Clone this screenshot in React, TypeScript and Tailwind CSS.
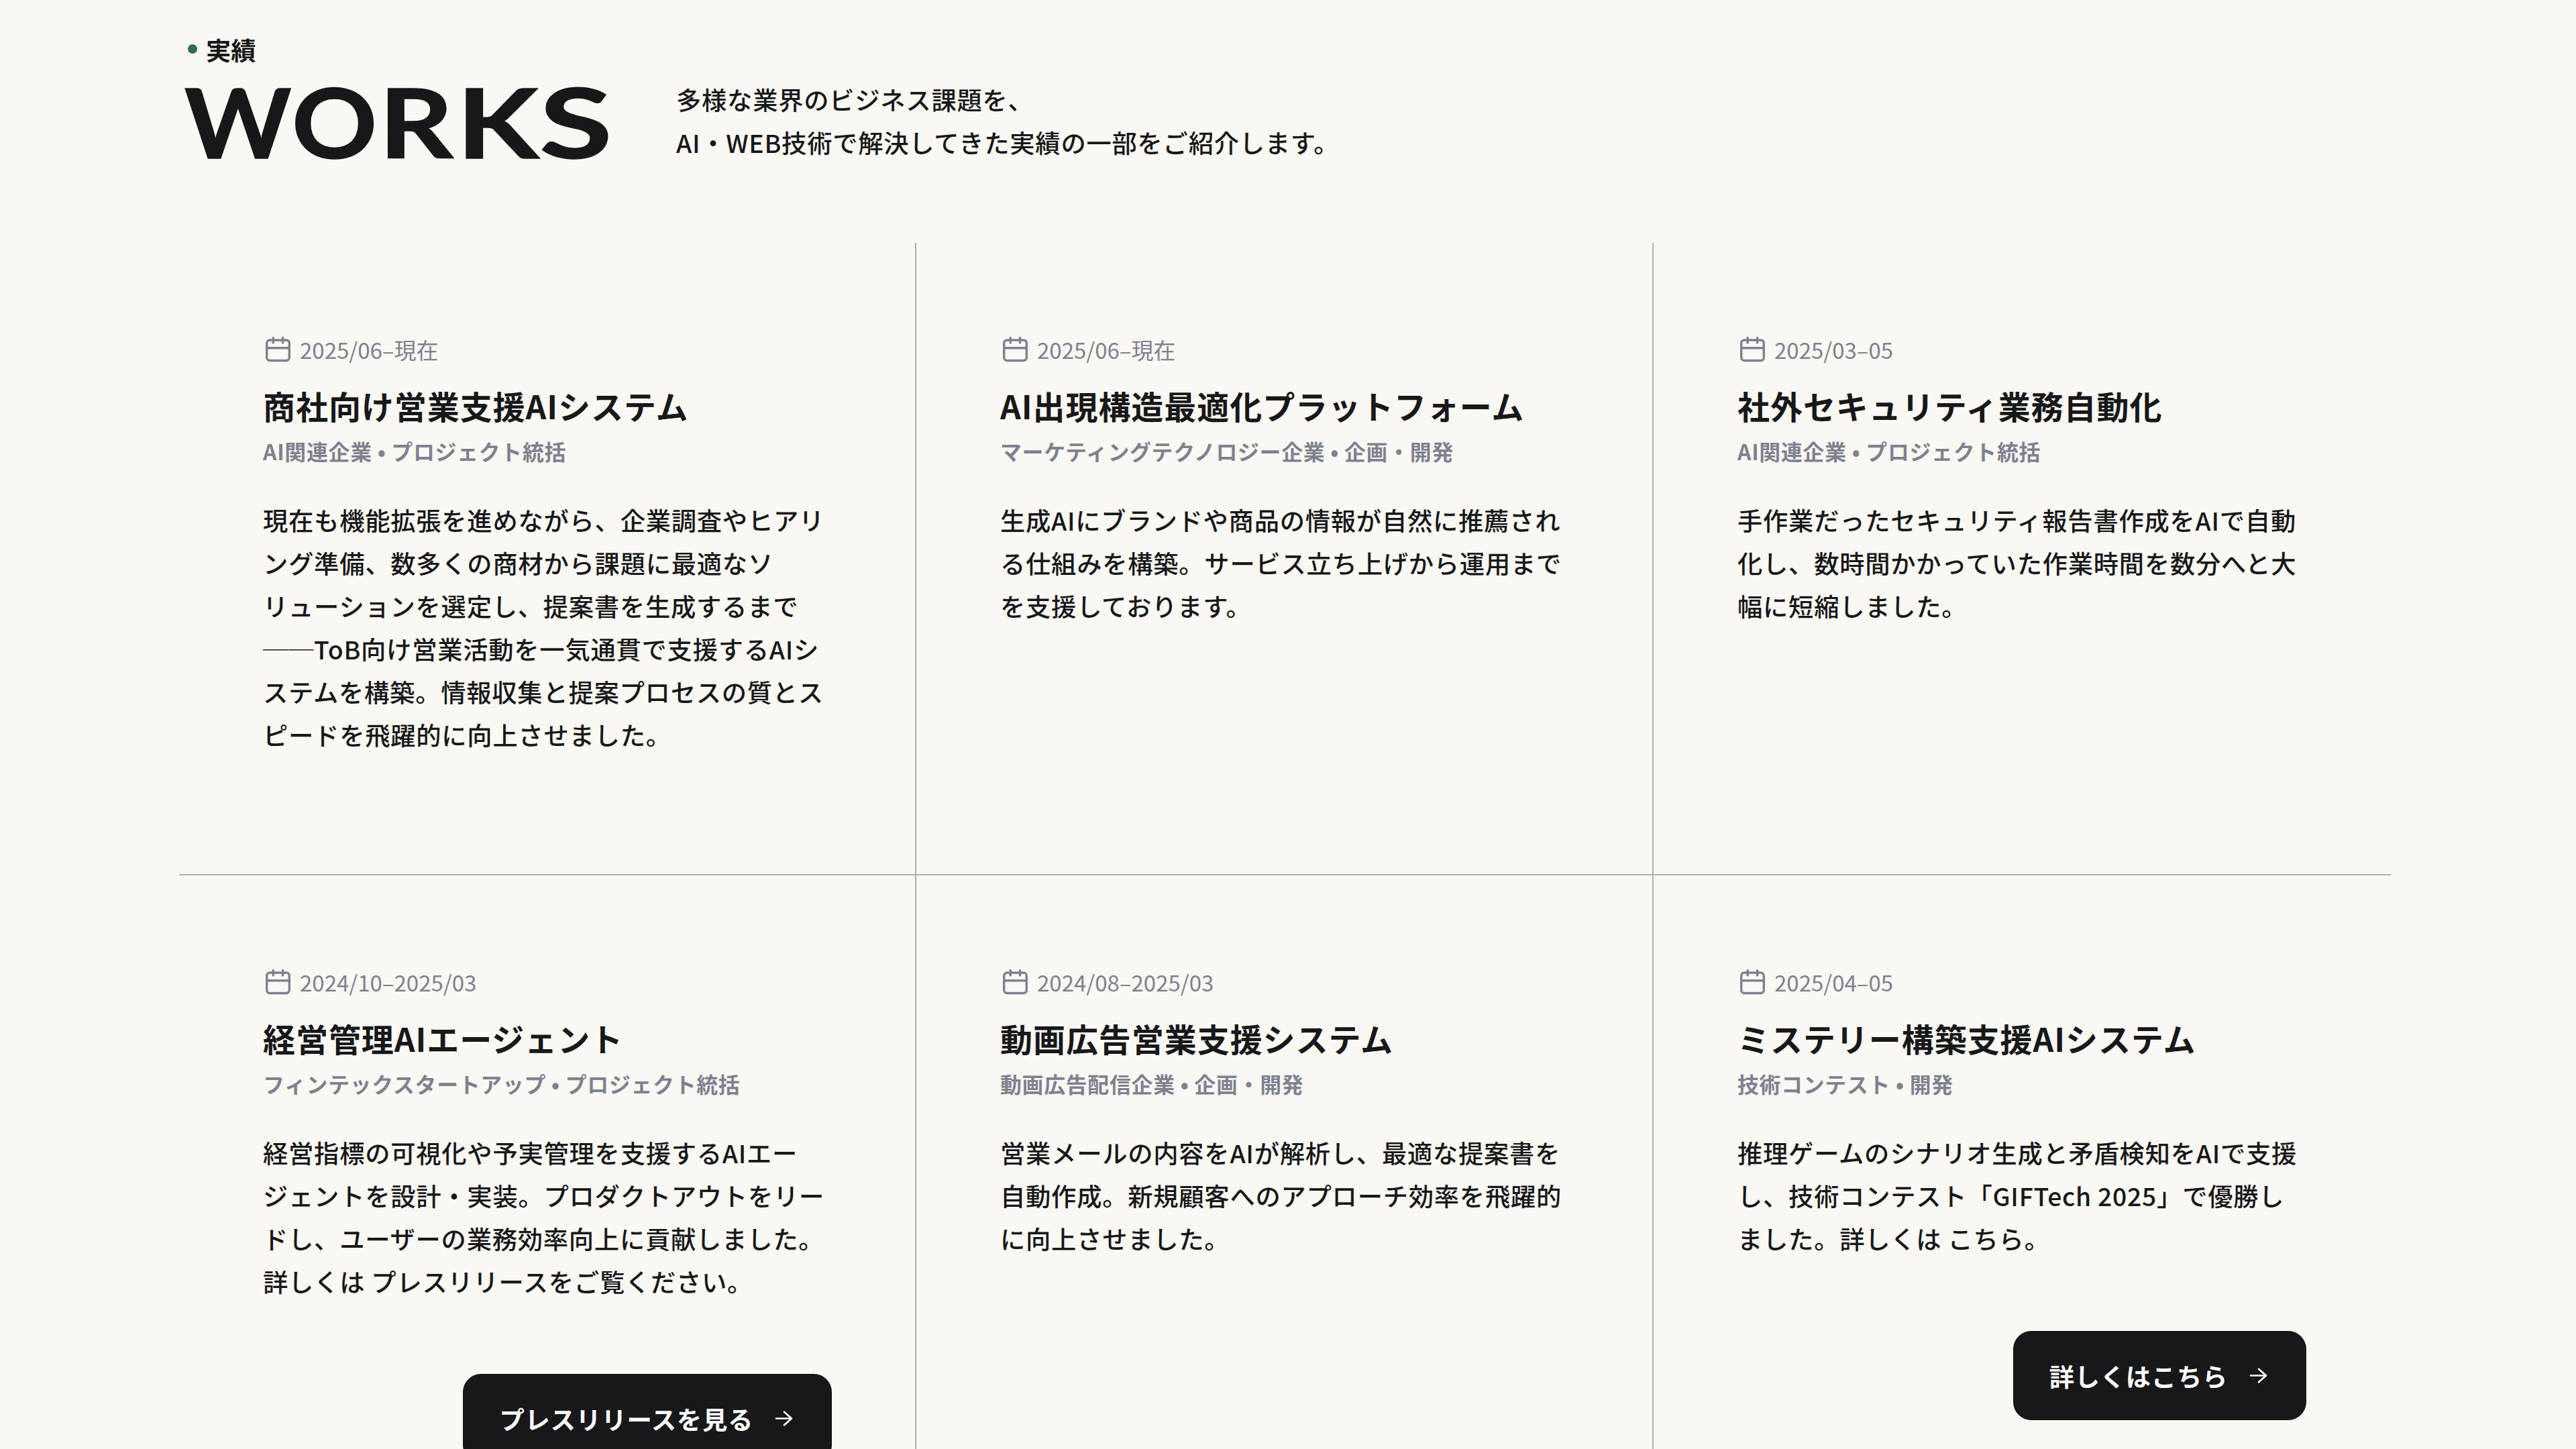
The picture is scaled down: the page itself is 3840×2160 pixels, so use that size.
import React from 'react';

interface Work {
  period: string;
  title: string;
  meta: string;
  lines: string[];
  link?: string;
}

const works: Work[] = [
  {
    period: '2025/06–現在',
    title: '商社向け営業支援AIシステム',
    meta: 'AI関連企業 • プロジェクト統括',
    lines: [
      '現在も機能拡張を進めながら、企業調査やヒアリ',
      'ング準備、数多くの商材から課題に最適なソ',
      'リューションを選定し、提案書を生成するまで',
      '──ToB向け営業活動を一気通貫で支援するAIシ',
      'ステムを構築。情報収集と提案プロセスの質とス',
      'ピードを飛躍的に向上させました。',
    ],
  },
  {
    period: '2025/06–現在',
    title: 'AI出現構造最適化プラットフォーム',
    meta: 'マーケティングテクノロジー企業 • 企画・開発',
    lines: [
      '生成AIにブランドや商品の情報が自然に推薦され',
      'る仕組みを構築。サービス立ち上げから運用まで',
      'を支援しております。',
    ],
  },
  {
    period: '2025/03–05',
    title: '社外セキュリティ業務自動化',
    meta: 'AI関連企業 • プロジェクト統括',
    lines: [
      '手作業だったセキュリティ報告書作成をAIで自動',
      '化し、数時間かかっていた作業時間を数分へと大',
      '幅に短縮しました。',
    ],
  },
  {
    period: '2024/10–2025/03',
    title: '経営管理AIエージェント',
    meta: 'フィンテックスタートアップ • プロジェクト統括',
    lines: [
      '経営指標の可視化や予実管理を支援するAIエー',
      'ジェントを設計・実装。プロダクトアウトをリー',
      'ドし、ユーザーの業務効率向上に貢献しました。',
      '詳しくは プレスリリースをご覧ください。',
    ],
    link: 'プレスリリースを見る',
  },
  {
    period: '2024/08–2025/03',
    title: '動画広告営業支援システム',
    meta: '動画広告配信企業 • 企画・開発',
    lines: [
      '営業メールの内容をAIが解析し、最適な提案書を',
      '自動作成。新規顧客へのアプローチ効率を飛躍的',
      'に向上させました。',
    ],
  },
  {
    period: '2025/04–05',
    title: 'ミステリー構築支援AIシステム',
    meta: '技術コンテスト • 開発',
    lines: [
      '推理ゲームのシナリオ生成と矛盾検知をAIで支援',
      'し、技術コンテスト「GIFTech 2025」で優勝し',
      'ました。詳しくは こちら。',
    ],
    link: '詳しくはこちら',
  },
];

const CalendarIcon: React.FC = () => (
  <svg className="w-[45px] h-[42px] shrink-0" viewBox="0 0 45 42" fill="none" stroke="currentColor" strokeWidth="3.4" strokeLinecap="round" strokeLinejoin="round">
    <rect x="5.7" y="7" width="33.6" height="30.5" rx="4.5" />
    <path d="M15.2 3.5v7.5M29.6 3.5v7.5M5.7 18.8h33.6" />
  </svg>
);

const ArrowIcon: React.FC = () => (
  <svg className="w-[37px] h-[37px] shrink-0" viewBox="0 0 37 37" fill="none" stroke="currentColor" strokeWidth="2.6" strokeLinecap="round" strokeLinejoin="round">
    <path d="M8 18.5h23M20 8.7l11 9.8l-11 9.8" />
  </svg>
);

const WorkCard: React.FC<{ work: Work; className: string }> = ({ work, className }) => (
  <article className={`h-[943px] pl-[125px] pt-[133px] border-[#afb0b7] ${className}`}>
    <div className="flex items-center h-[52px] gap-[10px] text-[#7f8190]">
      <CalendarIcon />
      <span className="text-[33px] leading-[52px]">{work.period}</span>
    </div>
    <h2 className="mt-[25px] text-[48px] leading-[64px] font-bold tracking-[0.95px]">{work.title}</h2>
    <p className="mt-[10px] text-[31.9px] leading-[52px] font-bold tracking-[0.7px] text-[#7f8190]">{work.meta}</p>
    <p className="mt-[45px] text-[37.3px] leading-[64px] font-medium tracking-[0.75px]">
      {work.lines.map((line) => (
        <span key={line} className="block">{line}</span>
      ))}
    </p>
    {work.link && (
      <div className="mt-[106px] flex justify-end">
        <a className="flex items-center h-[133px] px-[54px] gap-[26px] rounded-[27px] bg-[#18181a] text-white">
          <span className="text-[37.3px] leading-[64px] font-bold tracking-[0.75px]">{work.link}</span>
          <ArrowIcon />
        </a>
      </div>
    )}
  </article>
);

const App: React.FC = () => {
  return (
    <div className="w-[3840px] h-[2160px] overflow-hidden bg-[#f9f8f3] text-[#18181a] font-['Noto_Sans_CJK_JP',sans-serif] whitespace-nowrap">
      <header className="h-[362px] pl-[275px] pt-[42px]">
        <div className="flex items-center h-[64px] pl-[5px] gap-[13px]">
          <span className="size-[14px] -mt-[3px] rounded-full bg-[#2f6f4c]"></span>
          <span className="text-[37.3px] leading-[64px] font-bold">実績</span>
        </div>
        <div className="flex">
          <h1 className="w-[733px] flex h-[160px] -mt-[6px] text-[144.5px] leading-[160px] font-bold font-['Lato',sans-serif] [-webkit-text-stroke:1.5px_#18181a]">
            <span className="w-[160px]"><span className="inline-block origin-left scale-x-[1.05]">W</span></span>
            <span className="w-[130px]"><span className="inline-block origin-left scale-x-[1.09]">O</span></span>
            <span className="w-[116px]"><span className="inline-block origin-left scale-x-[1.19]">R</span></span>
            <span className="w-[123px]"><span className="inline-block origin-left scale-x-[1.23]">K</span></span>
            <span><span className="inline-block origin-left scale-x-[1.37]">S</span></span>
          </h1>
          <p className="mt-[10px] text-[37.3px] leading-[64px] font-medium tracking-[0.75px]">
            多様な業界のビジネス課題を、<br />
            AI・WEB技術で解決してきた実績の一部をご紹介します。
          </p>
        </div>
      </header>

      <main className="ml-[267px] w-[3297px] grid grid-cols-3">
        {works.map((work, i) => (
          <WorkCard key={work.title} work={work} className={`${i % 3 < 2 ? 'border-r-2 pr-[124px]' : 'pr-[126px]'} ${i < 3 ? 'border-b-2' : ''}`} />
        ))}
      </main>
    </div>
  );
};

export default App;
